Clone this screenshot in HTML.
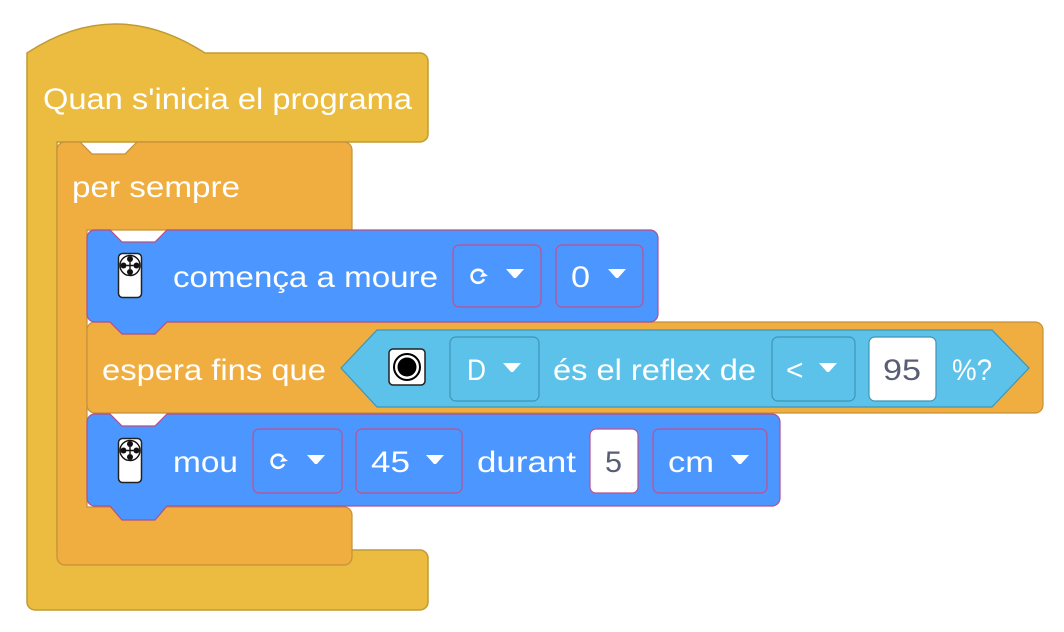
<!DOCTYPE html>
<html><head><meta charset="utf-8"><style>
html,body{margin:0;padding:0;background:#fff;width:1064px;height:632px;overflow:hidden}
svg{display:block}
text{font-family:"Liberation Sans",sans-serif;font-size:30px;fill:#fff}
</style></head><body>
<svg width="1064" height="632" viewBox="0 0 1064 632" xmlns="http://www.w3.org/2000/svg">
<defs>
<g id="tri"><path d="M0 0 H18 L10 9 H8 Z" fill="#fff"/></g>
<g id="rot"><path d="M14 4 A6.5 6.5 0 1 0 15 11" fill="none" stroke="#fff" stroke-width="2.6"/><path d="M11 9 L19 8 L14 4 Z" fill="#fff"/></g>
<g id="remote">
<rect x="0.5" y="0.5" width="23" height="44" rx="4" fill="#fff" stroke="#222" stroke-width="1.5"/>
<circle cx="12" cy="12.5" r="10" fill="#fff" stroke="#111" stroke-width="1.4"/>
<circle cx="12" cy="6" r="3" fill="#111"/><circle cx="12" cy="19" r="3" fill="#111"/>
<circle cx="5.5" cy="12.5" r="3" fill="#111"/><circle cx="18.5" cy="12.5" r="3" fill="#111"/>
<path d="M12 9 V16 M8.5 12.5 H15.5" stroke="#111" stroke-width="1.4"/>
</g>
</defs>

<path d="M27 53 Q115 -5 205 53 H420 a8 8 0 0 1 8 8 V134 a8 8 0 0 1 -8 8 H57 V550 H420 a8 8 0 0 1 8 8 V602 a8 8 0 0 1 -8 8 H35 a8 8 0 0 1 -8 -8 Z" fill="#EBBC40" stroke="#C09B34" stroke-width="1.5"/>
<text x="43" y="109" textLength="369" lengthAdjust="spacingAndGlyphs">Quan s'inicia el programa</text>

<path d="M65 142 H80 L92 154 H125 L137 142 H344 a8 8 0 0 1 8 8 V230 H87 V507 H344 a8 8 0 0 1 8 8 V557 a8 8 0 0 1 -8 8 H65 a8 8 0 0 1 -8 -8 V150 a8 8 0 0 1 8 -8 Z" fill="#F0AD40" stroke="#C6903A" stroke-width="1.2"/>
<text x="72" y="197" textLength="168" lengthAdjust="spacingAndGlyphs">per sempre</text>

<path d="M95 322 H110 L122 334 H155 L167 322 H1035 a8 8 0 0 1 8 8 V405 a8 8 0 0 1 -8 8 H95 a8 8 0 0 1 -8 -8 V330 a8 8 0 0 1 8 -8 Z" fill="#F0AD40" stroke="#C6903A" stroke-width="1.2"/>
<text x="102" y="380" textLength="224" lengthAdjust="spacingAndGlyphs">espera fins que</text>
<path d="M341 368 L377 330 H992 L1029 368 L992 407 H377 Z" fill="#5CC2E9" stroke="#3F95B5" stroke-width="1.2"/>
<rect x="389" y="349" width="36" height="36" rx="4" fill="#fff" stroke="#222" stroke-width="1.5"/>
<circle cx="407" cy="367" r="13" fill="#fff" stroke="#000" stroke-width="2"/>
<circle cx="407" cy="367" r="9.5" fill="#000"/>
<rect x="450" y="337" width="89" height="64" rx="6" fill="#5CC2E9" stroke="#3F95B5" stroke-width="1.2"/>
<text x="467" y="380" textLength="19" lengthAdjust="spacingAndGlyphs">D</text><use href="#tri" x="503" y="363"/>
<text x="553" y="380" textLength="203" lengthAdjust="spacingAndGlyphs">és el reflex de</text>
<rect x="772" y="337" width="83" height="64" rx="6" fill="#5CC2E9" stroke="#3F95B5" stroke-width="1.2"/>
<text x="786" y="380">&lt;</text><use href="#tri" x="819" y="363"/>
<rect x="869" y="337" width="67" height="64" rx="6" fill="#fff" stroke="#3F95B5" stroke-width="1.2"/>
<text x="883" y="380" textLength="38" lengthAdjust="spacingAndGlyphs" style="fill:#575E75">95</text>
<text x="952" y="380" textLength="40" lengthAdjust="spacingAndGlyphs">%?</text>

<path d="M95 230 H110 L122 242 H155 L167 230 H650 a8 8 0 0 1 8 8 V314 a8 8 0 0 1 -8 8 H167 L155 334 H122 L110 322 H95 a8 8 0 0 1 -8 -8 V238 a8 8 0 0 1 8 -8 Z" fill="#4C97FF" stroke="#B0508A" stroke-width="1.2"/>
<use href="#remote" x="118" y="253"/>
<text x="173" y="287" textLength="265" lengthAdjust="spacingAndGlyphs">comença a moure</text>
<rect x="453" y="245" width="88" height="62" rx="6" fill="#4C97FF" stroke="#C0508A" stroke-width="1.2"/>
<use href="#rot" x="469" y="268"/><use href="#tri" x="506" y="269"/>
<rect x="556" y="245" width="87" height="62" rx="6" fill="#4C97FF" stroke="#C0508A" stroke-width="1.2"/>
<text x="571" y="287" textLength="19" lengthAdjust="spacingAndGlyphs">0</text><use href="#tri" x="608" y="269"/>

<path d="M95 414 H110 L122 426 H155 L167 414 H772 a8 8 0 0 1 8 8 V498 a8 8 0 0 1 -8 8 H167 L155 520 H122 L110 506 H95 a8 8 0 0 1 -8 -8 V422 a8 8 0 0 1 8 -8 Z" fill="#4C97FF" stroke="#B0508A" stroke-width="1.2"/>
<use href="#remote" x="118" y="438"/>
<text x="173" y="472" textLength="65" lengthAdjust="spacingAndGlyphs">mou</text>
<rect x="253" y="429" width="89" height="64" rx="6" fill="#4C97FF" stroke="#C0508A" stroke-width="1.2"/>
<use href="#rot" x="269" y="453"/><use href="#tri" x="307" y="455"/>
<rect x="356" y="429" width="106" height="64" rx="6" fill="#4C97FF" stroke="#C0508A" stroke-width="1.2"/>
<text x="371" y="472" textLength="39" lengthAdjust="spacingAndGlyphs">45</text><use href="#tri" x="426" y="455"/>
<text x="477" y="472" textLength="99" lengthAdjust="spacingAndGlyphs">durant</text>
<rect x="590" y="429" width="48" height="64" rx="6" fill="#fff" stroke="#C0508A" stroke-width="1.2"/>
<text x="605" y="472" textLength="17" lengthAdjust="spacingAndGlyphs" style="fill:#575E75">5</text>
<rect x="653" y="429" width="114" height="64" rx="6" fill="#4C97FF" stroke="#C0508A" stroke-width="1.2"/>
<text x="668" y="472" textLength="46" lengthAdjust="spacingAndGlyphs">cm</text><use href="#tri" x="731" y="455"/>
</svg>
</body></html>
